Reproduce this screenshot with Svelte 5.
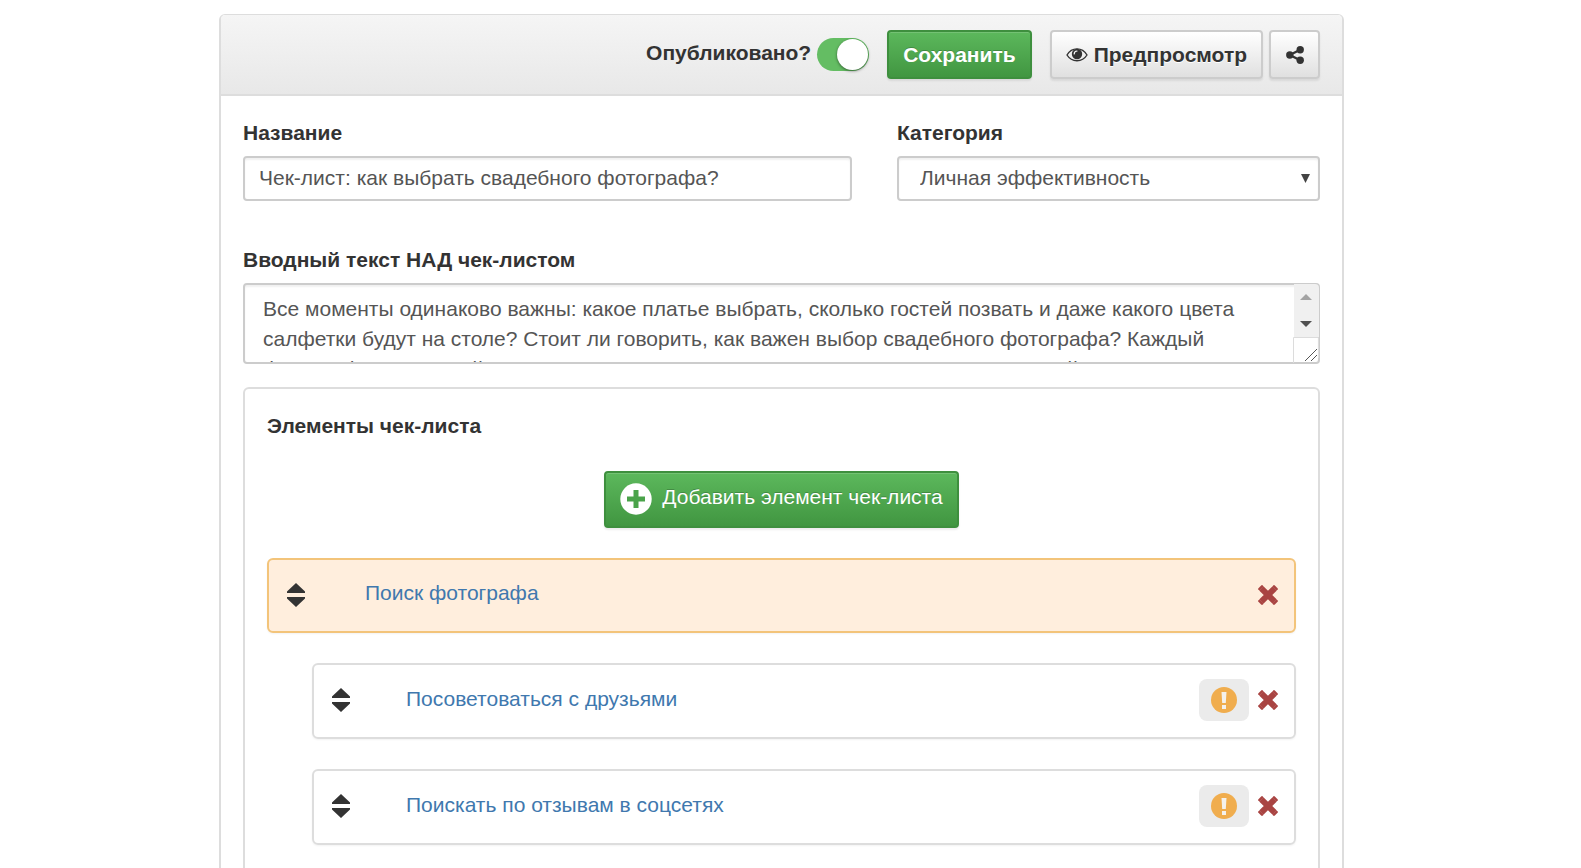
<script>
  let title = $state('Чек-лист: как выбрать свадебного фотографа?');
  let intro = $state(
    'Все моменты одинаково важны: какое платье выбрать, сколько гостей позвать и даже какого цвета салфетки будут на столе? Стоит ли говорить, как важен выбор свадебного фотографа? Каждый фотограф уникальный по своему, а потому вам очень важно заранее понять, какой нужен вам'
  );
  let published = $state(true);
  let items = $state([
    { id: 1, text: 'Поиск фотографа', group: true },
    { id: 2, text: 'Посоветоваться с друзьями', group: false },
    { id: 3, text: 'Поискать по отзывам в соцсетях', group: false }
  ]);
  const remove = (id) => (items = items.filter((i) => i.id !== id));
</script>

<main class="page">
  <section class="panel">
    <header class="toolbar">
      <label class="publish">
        <span>Опубликовано?</span>
        <input type="checkbox" role="switch" bind:checked={published} />
      </label>
      <button class="btn primary save" type="button">Сохранить</button>
      <div class="group">
        <button class="btn plain" type="button">
          <svg width="22" height="18" viewBox="0 0 22 18" aria-hidden="true">
            <path d="M1 9C5.800 .8 16.200 .8 21 9C16.200 16.600 5.800 16.600 1 9Z" fill="none" stroke="#333" stroke-width="1.400" />
            <circle cx="11" cy="8" r="5.200" fill="#333" />
            <path d="M8.200 8A3 3 0 0 1 11 5" fill="none" stroke="#f6f6f6" stroke-width="1.200" stroke-linecap="round" />
          </svg>
          Предпросмотр
        </button>
        <button class="btn plain share" type="button" aria-label="Поделиться">
          <svg width="18" height="18" viewBox="0 0 18 18" aria-hidden="true">
            <path d="M14.200 3.700L3.800 9L14.200 14.300" fill="none" stroke="#333" stroke-width="2.400" />
            <g fill="#333"><circle cx="14.200" cy="3.800" r="3.700" /><circle cx="3.800" cy="9" r="3.700" /><circle cx="14.200" cy="14.200" r="3.700" /></g>
          </svg>
        </button>
      </div>
    </header>

    <div class="body">
      <div class="fields">
        <div class="field">
          <label for="title">Название</label>
          <input id="title" class="control" type="text" bind:value={title} />
        </div>
        <div class="field">
          <label for="category">Категория</label>
          <div class="pick">
            <select id="category" class="control">
              <option>Личная эффективность</option>
            </select>
            <svg class="caret" width="9" height="9" viewBox="0 0 9 9" aria-hidden="true"><path d="M0 0H9L4.500 9Z" fill="#444" /></svg>
          </div>
        </div>
      </div>

      <div class="field">
        <label for="intro">Вводный текст НАД чек-листом</label>
        <div class="area">
          <textarea id="intro" class="control" bind:value={intro}></textarea>
          <svg class="scroll" width="26" height="79" viewBox="0 0 26 79" aria-hidden="true">
            <path d="M1 0H22A4 4 0 0 1 26 4V53H1Z" fill="#f0f0f0" />
            <path d="M7 16L13 10L19 16Z" fill="#a3a3a3" />
            <path d="M7 37H19L13 43Z" fill="#505050" />
            <path d="M.5 79V53.500H25.500V74" fill="none" stroke="#dcdcdc" />
            <path d="M12 77L24 65M18 77L24 71" fill="none" stroke="#555" />
          </svg>
        </div>
      </div>

      <section class="checklist">
        <h2>Элементы чек-листа</h2>
        <button class="btn primary add" type="button">
          <svg width="32" height="32" viewBox="0 0 32 32" aria-hidden="true">
            <circle cx="16" cy="16" r="15.700" fill="#fff" />
            <path d="M16 7V25M7 16H25" stroke="#4aa34a" stroke-width="5" />
          </svg>
          <span>Добавить элемент чек-листа</span>
        </button>
        <ul>
          {#each items as item (item.id)}
            <li class:head={item.group}>
              <button class="icon" type="button" aria-label="Переместить">
                <svg width="18" height="24" viewBox="0 0 18 24" aria-hidden="true">
                  <path d="M9 0L18 8.500V10H0V8.500ZM0 14H18V15.500L9 24L0 15.500Z" fill="#333" />
                </svg>
              </button>
              <a href="#item-{item.id}">{item.text}</a>
              {#if !item.group}
                <button class="icon warn" type="button" aria-label="Важно">
                  <svg width="26" height="26" viewBox="0 0 26 26" aria-hidden="true">
                    <circle cx="13" cy="13" r="13" fill="#f0ad4e" />
                    <path d="M10.500 5H15.500L14.800 16H11.200ZM11 18H15V22H11Z" fill="#f4f1ec" />
                  </svg>
                </button>
              {/if}
              <button class="icon" type="button" aria-label="Удалить" onclick={() => remove(item.id)}>
                <svg width="20" height="20" viewBox="0 0 20 20" aria-hidden="true">
                  <path d="M3.300 3.300L16.700 16.700M16.700 3.300L3.300 16.700" stroke="#a94442" stroke-width="6" />
                  <path d="M4 1.300L1.300 4M16 1.300L18.700 4M4 18.700L1.300 16M16 18.700L18.700 16" stroke="#a94442" stroke-width="2.400" stroke-linecap="round" />
                </svg>
              </button>
            </li>
          {/each}
        </ul>
      </section>
    </div>
  </section>
</main>

<style>
  :global(body) {
    background: #fff;
    overflow: hidden;
  }
  .page {
    box-sizing: border-box;
    height: 100vh;
    overflow: hidden;
    padding: 14px 18px 0 0;
    font: 21px/30px 'Liberation Sans', Arial, sans-serif;
    color: #333;
  }
  .page :global(*) {
    box-sizing: border-box;
  }
  .panel {
    width: calc(100% - 60px);
    max-width: 1125px;
    min-height: 1100px;
    margin: 0 auto;
    border: 2px solid #ddd;
    border-top-width: 1px;
    border-radius: 6px;
  }
  .toolbar {
    display: flex;
    align-items: center;
    justify-content: flex-end;
    gap: 18px;
    padding: 15px 22px;
    border-bottom: 2px solid #ddd;
    border-radius: 4px 4px 0 0;
    background: linear-gradient(#f5f5f5, #e8e8e8);
  }
  button {
    margin: 0;
    font: inherit;
    color: inherit;
    cursor: pointer;
  }
  svg {
    display: block;
    flex: none;
  }
  .publish {
    display: flex;
    align-items: center;
    gap: 6px;
    font-weight: bold;
  }
  .publish span {
    padding-bottom: 4px;
  }
  .publish input {
    appearance: none;
    width: 52px;
    height: 33px;
    margin: 0;
    padding: 1px;
    border-radius: 17px;
    background: #ccc;
  }
  .publish input::before {
    content: '';
    display: block;
    width: 31px;
    height: 31px;
    border-radius: 50%;
    background: #fff;
    box-shadow: 0 1px 3px rgba(0, 0, 0, 0.5);
  }
  .publish input:checked {
    background: #64bd63;
  }
  .publish input:checked::before {
    margin-left: auto;
  }
  .group {
    display: flex;
    gap: 6px;
  }
  .btn {
    display: flex;
    align-items: center;
    justify-content: center;
    gap: 6px;
    height: 49px;
    padding: 0 14px;
    border: 2px solid #ccc;
    border-radius: 4px;
    font-weight: bold;
  }
  .plain {
    background: linear-gradient(#fff, #e0e0e0);
    box-shadow: 0 2px 2px rgba(0, 0, 0, 0.08);
    text-shadow: 0 1px 0 #fff;
  }
  .share {
    width: 51px;
  }
  .primary {
    border-color: #3e8f3e;
    background: linear-gradient(#5cb85c, #419641);
    box-shadow: inset 0 1px 0 rgba(255, 255, 255, 0.15), 0 2px 2px rgba(0, 0, 0, 0.08);
    color: #fff;
    text-shadow: 0 -1px 0 rgba(0, 0, 0, 0.2);
  }
  .body {
    padding: 22px;
  }
  .fields {
    display: grid;
    grid-template-columns: 609fr 423fr;
    gap: 45px;
    margin-bottom: 44px;
  }
  .field > label {
    display: block;
    margin-bottom: 8px;
    font-weight: bold;
  }
  .control {
    display: block;
    width: 100%;
    height: 45px;
    margin: 0;
    padding: 0 14px 1px;
    border: 2px solid #ccc;
    border-radius: 4px;
    background: #fff;
    box-shadow: inset 0 2px 2px rgba(0, 0, 0, 0.06);
    color: #555;
    font: inherit;
  }
  .pick,
  .area {
    position: relative;
  }
  select.control {
    appearance: none;
    padding-left: 21px;
  }
  .caret {
    position: absolute;
    right: 10px;
    top: 18px;
    pointer-events: none;
  }
  textarea.control {
    height: 81px;
    padding: 9px 44px 0 18px;
    overflow: hidden;
    resize: none;
  }
  .scroll {
    position: absolute;
    right: 1px;
    top: 1px;
  }
  .checklist {
    min-height: 700px;
    margin-top: 23px;
    padding: 22px;
    border: 2px solid #ddd;
    border-radius: 6px;
  }
  h2 {
    margin: 0 0 30px;
    font: bold 21px/30px 'Liberation Sans', Arial, sans-serif;
  }
  .add {
    height: 57px;
    margin: 0 auto 30px;
    padding-bottom: 2px;
    gap: 10px;
    font-weight: normal;
  }
  .add span {
    padding-bottom: 4px;
  }
  ul {
    display: flex;
    flex-direction: column;
    gap: 30px;
    margin: 0;
    padding: 0;
    list-style: none;
  }
  li {
    display: flex;
    align-items: center;
    gap: 9px;
    height: 76px;
    margin-left: 45px;
    padding: 0 16px 2px 18px;
    border: 2px solid #ddd;
    border-radius: 6px;
    box-shadow: 0 1px 2px rgba(0, 0, 0, 0.05);
  }
  li.head {
    height: 75px;
    margin-left: 0;
    border-color: #f3c47a;
    background: #ffeedd;
  }
  li a {
    flex: 1;
    padding: 0 0 3px 47px;
    color: #4078ae;
    text-decoration: none;
  }
  li.head a {
    padding-left: 51px;
  }
  .icon {
    padding: 0;
    border: 0;
    background: none;
  }
  .warn {
    padding: 8px 12px;
    border-radius: 8px;
    background: #ebebeb;
  }
</style>
